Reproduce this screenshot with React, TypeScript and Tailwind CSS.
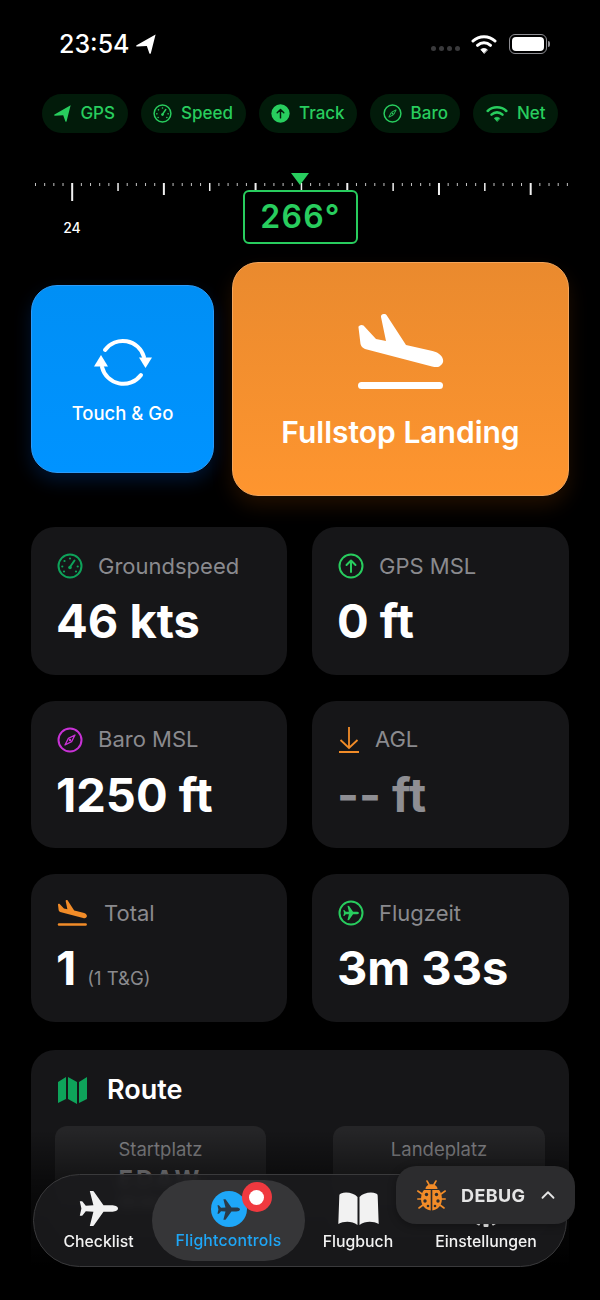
import { ChevronUp } from "lucide-react"

const LANDING_PLANE =
  "M0.5 13.5 C0 11.5 3.5 10 5.5 11.5 L18 25 L28 27 L23 3 C22.5 0 27 -1 28.5 1 L48 31 L74.5 37 C84 39 88 47 83 51 C81 53.5 78 53.5 74 52.5 L7 35 C4.5 34 3 32 2.5 30 Z"

const AIRPLANE =
  "M39 17.5 C39 15.4 35.5 14.3 32.5 14.3 L24.5 14.3 L14.8 0.6 C14.4 0.1 13.9 0 13.3 0 L10.8 0 L14.4 14.3 L6.8 14.7 L3.6 10.8 C3.3 10.4 3 10.3 2.5 10.3 L0.8 10.3 L2.4 17.5 L0.8 24.7 L2.5 24.7 C3 24.7 3.3 24.6 3.6 24.2 L6.8 20.3 L14.4 20.7 L10.8 35 L13.3 35 C13.9 35 14.4 34.9 14.8 34.4 L24.5 20.7 L32.5 20.7 C35.5 20.7 39 19.6 39 17.5 Z"

function Gauge({ className }: { className?: string }) {
  return (
    <svg viewBox="0 0 26 26" className={className} fill="none" stroke="currentColor">
      <circle cx="13" cy="13" r="11.5" strokeWidth="2" />
      <path d="M13 14 L17.5 7.5" strokeWidth="2" strokeLinecap="round" />
      <circle cx="13" cy="14.5" r="1.8" fill="currentColor" stroke="none" />
      <g fill="currentColor" stroke="none">
        <circle cx="13" cy="5.5" r="1.1" />
        <circle cx="7.5" cy="8" r="1.1" />
        <circle cx="5.3" cy="13.5" r="1.1" />
        <circle cx="20.7" cy="13.5" r="1.1" />
        <circle cx="7" cy="18.5" r="1.1" />
        <circle cx="19" cy="18.5" r="1.1" />
      </g>
    </svg>
  )
}

function Compass({ className }: { className?: string }) {
  return (
    <svg viewBox="0 0 26 26" className={className} fill="none" stroke="currentColor">
      <circle cx="13" cy="13" r="11.5" strokeWidth="2" />
      <path d="M18 8 L14.6 14.6 L8 18 L11.4 11.4 Z" strokeWidth="1.3" strokeLinejoin="round" />
      <circle cx="13" cy="13" r="1.2" fill="currentColor" stroke="none" />
    </svg>
  )
}

function ArrowCircle({ className, filled }: { className?: string; filled?: boolean }) {
  return (
    <svg viewBox="0 0 26 26" className={className} fill="none">
      <circle
        cx="13"
        cy="13"
        r={filled ? 12.5 : 11.5}
        fill={filled ? "currentColor" : "none"}
        stroke={filled ? "none" : "currentColor"}
        strokeWidth="2"
      />
      <path
        d="M13 19 V7.5 M8.5 12 L13 7.5 L17.5 12"
        stroke={filled ? "#021b0a" : "currentColor"}
        strokeWidth="2"
        strokeLinecap="round"
        strokeLinejoin="round"
      />
    </svg>
  )
}

function Arrow({ className }: { className?: string }) {
  return (
    <svg viewBox="0 0 24 24" className={className} fill="currentColor">
      <path d="M23.5 0.5 L0.7 13.5 C-0.2 14.3 0.3 15 1.3 15 L13 14.5 L16 23 C16.3 24 17.5 24 17.8 23 Z" />
    </svg>
  )
}

function Wifi({ className }: { className?: string }) {
  return (
    <svg viewBox="0 0 26 20" className={className} fill="none" stroke="currentColor" strokeLinecap="round">
      <path d="M2 7 C8 1.3 18 1.3 24 7" strokeWidth="3" />
      <path d="M6.5 11.3 C10.3 7.8 15.7 7.8 19.5 11.3" strokeWidth="3" />
      <path d="M13 19.2 L9.8 15.6 C11.6 14 14.4 14 16.2 15.6 Z" fill="currentColor" strokeWidth="0.8" strokeLinejoin="round" />
    </svg>
  )
}

function PlaneCircle({ className }: { className?: string }) {
  return (
    <svg viewBox="0 0 26 26" className={className}>
      <circle cx="13" cy="13" r="11.5" fill="none" stroke="currentColor" strokeWidth="2" />
      <svg x="5" y="5.5" width="16" height="15" viewBox="0 0 39 35">
        <path d={AIRPLANE} fill="currentColor" />
      </svg>
    </svg>
  )
}

function Gear({ className }: { className?: string }) {
  const teeth = [0, 30, 60, 90, 120, 150]
  return (
    <svg viewBox="0 0 36 36" className={className} fill="#f2f2f2">
      <circle cx="18" cy="18" r="14.5" />
      {teeth.map((deg) => (
        <rect key={deg} x="15.5" y="0" width="5" height="36" rx="1" transform={`rotate(${deg} 18 18)`} />
      ))}
    </svg>
  )
}

function Ruler() {
  const ticks = Array.from({ length: 59 }, (_, i) => i)
  return (
    <svg viewBox="0 0 600 30" className="block h-[30px] w-[600px]">
      {ticks.map((i) => {
        const x = 35.5 + i * 9.17
        const step = i - 4
        let h = 3
        let w = 1
        if (step === 0) {
          h = 18
          w = 2
        } else if (step % 10 === 0) {
          h = 12
          w = 2
        } else if (step % 5 === 0) {
          h = 8
          w = 1.5
        }
        return <rect key={i} x={x - w / 2} y={1} width={w} height={h} fill={step % 5 === 0 ? "#f0f0f0" : "#c4c4c4"} />
      })}
    </svg>
  )
}

function StatusPill({ icon, label }: { icon: React.ReactNode; label: string }) {
  return (
    <div className="flex h-[39px] items-center gap-[9px] rounded-full bg-[#021b0a] px-[12.5px] text-[17px] font-medium text-[#28cd5e]">
      {icon}
      <span>{label}</span>
    </div>
  )
}

function StatCard({
  icon,
  label,
  value,
  sub,
  muted,
  gap = "gap-[15px]",
}: {
  icon: React.ReactNode
  label: string
  value: string
  sub?: string
  muted?: boolean
  gap?: string
}) {
  return (
    <div className="h-[147.5px] rounded-[24px] bg-[#161618] pl-[25px] pt-[24px]">
      <div className={`flex h-[30px] items-center pl-[1px] text-[22px] text-[#8a8a8e] ${gap}`}>
        {icon}
        <span>{label}</span>
      </div>
      <div className="mt-[12px] flex items-baseline gap-[11px] leading-[56px]">
        <span className={`text-[47px] font-bold ${muted ? "text-[#8e8e93]" : "text-white"}`}>{value}</span>
        {sub && <span className="text-[18.5px] text-[#8a8a8e]">{sub}</span>}
      </div>
    </div>
  )
}

function NavItem({ icon, label, className }: { icon: React.ReactNode; label: string; className: string }) {
  return (
    <div className={`flex flex-col items-center ${className}`}>
      <div className="flex h-[38px] items-center justify-center">{icon}</div>
      <span className="mt-[4px] text-[15.8px] font-medium leading-[20px]">{label}</span>
    </div>
  )
}

export default function App() {
  return (
    <div className="relative h-[1300px] w-[600px] overflow-hidden bg-black text-white [font-family:Inter,'Noto_Sans',sans-serif]">
      {/* Status bar */}
      <div className="flex h-[94px] items-start justify-between pl-[59px] pr-[50px] pt-[28px]">
        <div className="flex items-center gap-[6px] text-[25px] font-medium leading-[32px]">
          <span>23:54</span>
          <Arrow className="h-[20px] w-[20px]" />
        </div>
        <div className="flex items-center pt-[6px]">
          <div className="mr-[11px] mt-[8px] flex gap-[3px]">
            <span className="h-[5px] w-[5px] rounded-full bg-[#3a3a3c]" />
            <span className="h-[5px] w-[5px] rounded-full bg-[#3a3a3c]" />
            <span className="h-[5px] w-[5px] rounded-full bg-[#3a3a3c]" />
            <span className="h-[5px] w-[5px] rounded-full bg-[#3a3a3c]" />
          </div>
          <Wifi className="h-[20px] w-[26px] text-white" />
          <div className="ml-[12px] flex items-center">
            <div className="h-[20px] w-[38px] rounded-[6px] border border-[#8e8e93] p-[2px]">
              <div className="h-full w-full rounded-[4px] bg-white" />
            </div>
            <div className="ml-[1px] h-[6px] w-[2px] rounded-r-full bg-[#8e8e93]" />
          </div>
        </div>
      </div>

      {/* Sensor pills */}
      <div className="flex justify-center gap-[13px]">
        <StatusPill icon={<Arrow className="h-[17px] w-[17px]" />} label="GPS" />
        <StatusPill icon={<Gauge className="h-[19px] w-[19px]" />} label="Speed" />
        <StatusPill icon={<ArrowCircle filled className="h-[19px] w-[19px]" />} label="Track" />
        <StatusPill icon={<Compass className="h-[19px] w-[19px]" />} label="Baro" />
        <StatusPill icon={<Wifi className="h-[17px] w-[22px]" />} label="Net" />
      </div>

      {/* Heading tape */}
      <div className="relative mt-[49px] h-[80px]">
        <Ruler />
        <svg viewBox="0 0 18 12" className="absolute left-[291px] top-[-9px] h-[12px] w-[18px]">
          <path d="M0 0 H18 L9 12 Z" fill="#28cd5e" />
        </svg>
        <span className="absolute left-[62px] top-[37px] w-[20px] text-center text-[14px] font-medium leading-[18px]">24</span>
        <div className="absolute left-[243px] top-[8px] flex h-[54px] w-[115px] items-center justify-center rounded-[6px] border-2 border-[#28cd5e] bg-black text-[32px] font-semibold tracking-[1.2px] text-[#28cd5e]">
          266°
        </div>
      </div>

      {/* Landing buttons */}
      <div className="flex h-[234px] items-center gap-[18px] px-[31px]">
        <div className="flex h-[188px] w-[183px] flex-col items-center rounded-[26px] border border-[#2b9bfa] bg-gradient-to-b from-[#008ff5] to-[#0093ff] pt-[51px] shadow-[0_8px_18px_rgba(0,90,220,0.22)]">
          <svg viewBox="0 0 58 50" className="h-[50px] w-[58px]" fill="none">
            <path d="M11 13 A 22 22 0 0 1 50 20" stroke="white" strokeWidth="4" strokeLinecap="round" />
            <path d="M8 30 A 22 22 0 0 0 47 38" stroke="white" strokeWidth="4" strokeLinecap="round" />
            <path d="M45 20.5 H58 L51.5 31 Z" fill="white" />
            <path d="M0 29.5 H14 L7 18 Z" fill="white" />
          </svg>
          <span className="mt-[14px] text-[18.5px] font-medium leading-[24px]">Touch &amp; Go</span>
        </div>
        <div className="flex h-[234px] w-[337px] flex-col items-center rounded-[26px] border border-[#f5a55a] bg-gradient-to-b from-[#ea8a2e] to-[#fe952f] pt-[51px] shadow-[0_10px_20px_rgba(150,70,0,0.22)]">
          <svg viewBox="0 0 86 76" className="h-[76px] w-[86px]">
            <path d={LANDING_PLANE} fill="white" />
            <rect x="0" y="68" width="85" height="7" rx="3.5" fill="white" />
          </svg>
          <span className="mt-[24px] text-[30px] font-semibold leading-[36px]">Fullstop Landing</span>
        </div>
      </div>

      {/* Stats */}
      <div className="mt-[31px] grid grid-cols-[256px_257px] gap-x-[25px] gap-y-[26px] px-[31px]">
        <StatCard icon={<Gauge className="h-[26px] w-[26px] text-[#0ea35a]" />} label="Groundspeed" value="46 kts" />
        <StatCard icon={<ArrowCircle className="h-[26px] w-[26px] text-[#28cd5e]" />} label="GPS MSL" value="0 ft" />
        <StatCard icon={<Compass className="h-[26px] w-[26px] text-[#c832d6]" />} label="Baro MSL" value="1250 ft" />
        <StatCard
          icon={
            <svg viewBox="-1 0 22 26" className="h-[26px] w-[22px] text-[#f28c28]" fill="none" stroke="currentColor" strokeWidth="1.8">
              <path d="M10 0 V21 M1.5 13 L10 21 L18.5 13 M0 25 H20" />
            </svg>
          }
          label="AGL"
          value="-- ft"
          muted
        />
        <StatCard
          icon={
            <svg viewBox="0 0 86 76" className="h-[26px] w-[31px]">
              <path d={LANDING_PLANE} fill="#f28c28" />
              <rect x="0" y="68" width="85" height="7" rx="3.5" fill="#f28c28" />
            </svg>
          }
          label="Total"
          value="1"
          sub="(1 T&G)"
          gap="gap-[16px]"
        />
        <StatCard icon={<PlaneCircle className="h-[26px] w-[26px] text-[#28cd5e]" />} label="Flugzeit" value="3m 33s" />
      </div>

      {/* Route */}
      <div className="mx-[31px] mt-[28.5px] h-[300px] rounded-[24px] bg-[#161618] px-[24px] pt-[24px]">
        <div className="flex h-[32px] items-center gap-[20px] pl-[3px]">
          <svg viewBox="0 0 29 27" className="h-[27px] w-[29px]" fill="#0ea35a">
            <path d="M0 5 L8 0 V22 L0 26 Z M10 0 L19 5 V27 L10 22 Z M21 5 L29 0 V22 L21 26 Z" />
          </svg>
          <span className="text-[27px] font-semibold">Route</span>
        </div>
        <div className="mt-[20px] flex justify-between">
          <div className="h-[120px] w-[211px] rounded-[12px] bg-[#252527] pt-[10px] text-center">
            <div className="text-[18.5px] leading-[26px] text-[#8a8a8e]">Startplatz</div>
            <div className="mt-[3px] text-[24px] font-bold leading-[29px] tracking-[3px] text-[#a0a0a4]">EDAW</div>
            <div className="text-[13px] font-bold leading-[16px] text-white">ED DA 1 4 6 8</div>
          </div>
          <div className="h-[120px] w-[212px] rounded-[12px] bg-[#252527] pt-[10px] text-center">
            <div className="text-[18.5px] leading-[26px] text-[#8a8a8e]">Landeplatz</div>
          </div>
        </div>
      </div>

      {/* Fade behind the tab bar */}
      <div className="absolute left-0 top-[1130px] h-[170px] w-full bg-gradient-to-b from-transparent via-black/50 via-30% to-black to-80%" />

      {/* Tab bar */}
      <div className="absolute left-[33px] top-[1174px] flex h-[93px] w-[534px] items-center rounded-full border border-[#3a3a3c] bg-[#1c1c1e]/85 backdrop-blur-[5px]">
        <NavItem
          className="w-[118px] pl-[11px] text-[#f2f2f2]"
          label="Checklist"
          icon={
            <svg viewBox="0 0 39 35" className="h-[35px] w-[39px]">
              <path d={AIRPLANE} fill="#f2f2f2" />
            </svg>
          }
        />
        <div className="flex h-[81px] w-[153px] flex-col items-center justify-start rounded-full bg-[#3a3a3c]/90 pt-[11px]">
          <div className="relative flex h-[36px] w-[36px] items-center justify-center rounded-full bg-[#1ea7f8]">
            <svg viewBox="0 0 39 35" className="h-[21px] w-[23px]">
              <path d={AIRPLANE} fill="#2a3a48" />
            </svg>
            <div className="absolute left-[31px] top-[-9px] flex h-[30px] w-[30px] items-center justify-center rounded-full bg-[#f0393f]">
              <span className="h-[15px] w-[15px] rounded-full bg-white" />
            </div>
          </div>
          <span className="mt-[4px] text-[15.8px] font-medium leading-[20px] tracking-[0.2px] text-[#1ea7f8]">Flightcontrols</span>
        </div>
        <NavItem
          className="w-[106px] text-[#f2f2f2]"
          label="Flugbuch"
          icon={
            <svg viewBox="0 0 41 33" className="h-[33px] w-[41px]" fill="#f2f2f2">
              <path d="M19.5 5 C16 1 8 -0.5 3 1.5 C1.5 2 1.3 3 1.3 4 L0.3 32 C6 29 14 29 19.5 33 Z M21.5 5 C25 1 33 -0.5 38 1.5 C39.5 2 39.7 3 39.7 4 L40.7 32 C35 29 27 29 21.5 33 Z" />
            </svg>
          }
        />
        <NavItem className="w-[150px] text-[#f2f2f2]" label="Einstellungen" icon={<Gear className="h-[36px] w-[36px]" />} />
      </div>

      {/* Debug badge */}
      <div className="absolute left-[396px] top-[1166px] flex h-[58px] w-[179px] items-center rounded-[20px] bg-[#2c2c2e] pl-[21px] shadow-[0_2px_8px_rgba(0,0,0,0.3)]">
        <svg viewBox="0 0 29 31" className="h-[31px] w-[29px]">
          <g stroke="#f28c28" strokeWidth="1.6" strokeLinecap="round">
            <path d="M10 1 L12 4.5 M19 1 L17 4.5" />
            <path d="M0.8 11 L5 14 M28.2 11 L24 14 M0.8 19 H5 M28.2 19 H24 M2 28 L6 25 M27 28 L23 25" />
          </g>
          <path d="M8.5 9 C8.5 2.5 20.5 2.5 20.5 9 Z" fill="#f28c28" />
          <path d="M13.7 10 H7 C4 13 3.2 20 5 24 C6.6 27.7 10 30 13.7 30.5 Z M15.3 10 H22 C25 13 25.8 20 24 24 C22.4 27.7 19 30 15.3 30.5 Z" fill="#f28c28" />
          <g fill="#2c2c2e">
            <circle cx="9.5" cy="14.5" r="1.7" />
            <circle cx="19.5" cy="14.5" r="1.7" />
            <circle cx="8" cy="21" r="1.7" />
            <circle cx="21" cy="21" r="1.7" />
            <circle cx="11" cy="26" r="1.3" />
            <circle cx="18" cy="26" r="1.3" />
          </g>
        </svg>
        <span className="ml-[15px] text-[18px] font-bold tracking-[0.4px] text-[#e5e5e5]">DEBUG</span>
        <ChevronUp className="ml-[11px] h-[22px] w-[22px] text-[#e5e5e5]" strokeWidth={2} />
      </div>
    </div>
  )
}
